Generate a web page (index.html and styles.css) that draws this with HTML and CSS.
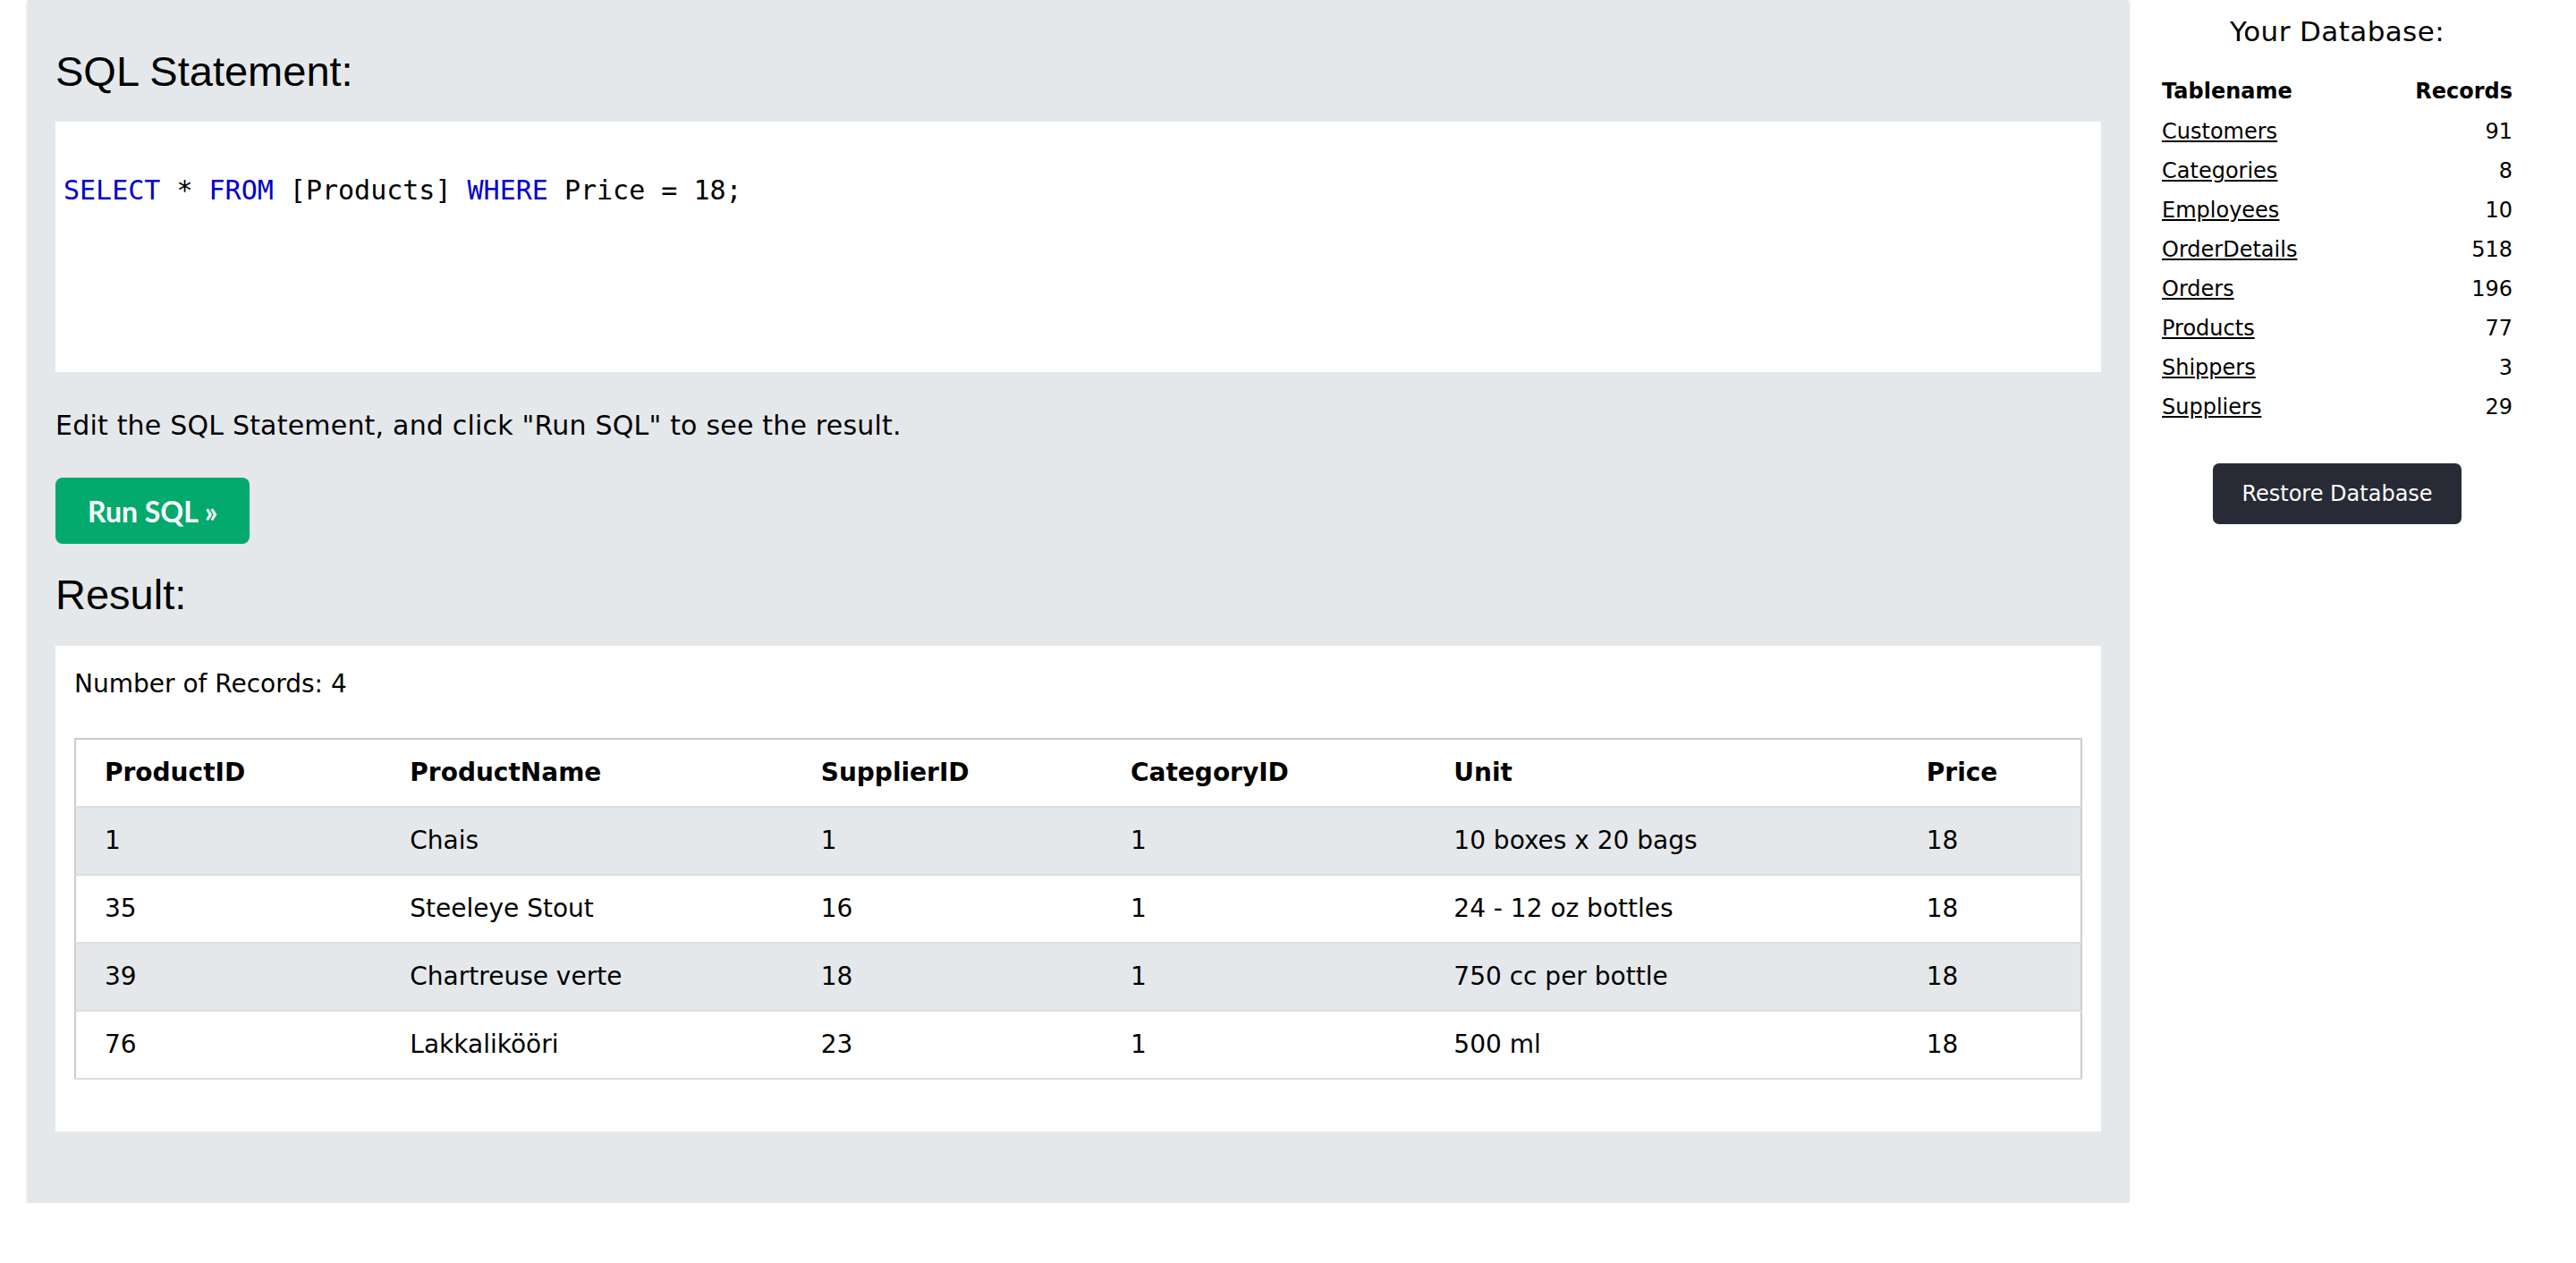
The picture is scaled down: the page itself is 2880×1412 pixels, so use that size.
FILE: index.html
```html
<!DOCTYPE html>
<html lang="en">
<head>
<meta charset="utf-8">
<title>SQL Tryit</title>
<link rel="stylesheet" href="styles.css">
</head>
<body>
<div class="layout">
  <main class="panel">
    <h2 class="heading">SQL Statement:</h2>
    <div class="code-box">
      <div class="code-line"><span class="kw">SELECT</span> * <span class="kw">FROM</span> [Products] <span class="kw">WHERE</span> Price = 18;</div>
    </div>
    <p class="hint">Edit the SQL Statement, and click "Run SQL" to see the result.</p>
    <button class="run-btn" type="button">Run SQL »</button>
    <h2 class="heading result-heading">Result:</h2>
    <div class="result-box">
      <div class="record-count">Number of Records: 4</div>
      <table class="result-table">
        <colgroup>
          <col class="c1"><col class="c2"><col class="c3"><col class="c4"><col class="c5"><col class="c6">
        </colgroup>
        <thead>
          <tr><th>ProductID</th><th>ProductName</th><th>SupplierID</th><th>CategoryID</th><th>Unit</th><th>Price</th></tr>
        </thead>
        <tbody>
          <tr><td>1</td><td>Chais</td><td>1</td><td>1</td><td>10 boxes x 20 bags</td><td>18</td></tr>
          <tr><td>35</td><td>Steeleye Stout</td><td>16</td><td>1</td><td>24 - 12 oz bottles</td><td>18</td></tr>
          <tr><td>39</td><td>Chartreuse verte</td><td>18</td><td>1</td><td>750 cc per bottle</td><td>18</td></tr>
          <tr><td>76</td><td>Lakkalikööri</td><td>23</td><td>1</td><td>500 ml</td><td>18</td></tr>
        </tbody>
      </table>
    </div>
  </main>
  <aside class="sidebar">
    <div class="db-title">Your Database:</div>
    <table class="db-table">
      <thead>
        <tr><th class="name">Tablename</th><th class="num">Records</th></tr>
      </thead>
      <tbody>
        <tr><td class="name"><a href="#">Customers</a></td><td class="num">91</td></tr>
        <tr><td class="name"><a href="#">Categories</a></td><td class="num">8</td></tr>
        <tr><td class="name"><a href="#">Employees</a></td><td class="num">10</td></tr>
        <tr><td class="name"><a href="#">OrderDetails</a></td><td class="num">518</td></tr>
        <tr><td class="name"><a href="#">Orders</a></td><td class="num">196</td></tr>
        <tr><td class="name"><a href="#">Products</a></td><td class="num">77</td></tr>
        <tr><td class="name"><a href="#">Shippers</a></td><td class="num">3</td></tr>
        <tr><td class="name"><a href="#">Suppliers</a></td><td class="num">29</td></tr>
      </tbody>
    </table>
    <button class="restore-btn" type="button">Restore Database</button>
  </aside>
</div>
</body>
</html>
```

FILE: styles.css
```css
* { box-sizing: border-box; }

html, body {
  margin: 0;
  padding: 0;
  background: #ffffff;
  color: #000000;
  font-family: "DejaVu Sans", Verdana, sans-serif;
  font-size: 30px;
}

.layout {
  display: flex;
  align-items: flex-start;
}

.panel {
  margin-left: 31px;
  width: 2348px;
  flex: 0 0 2348px;
  background: #e5e8eb;
  padding: 52px 30px 80px 31px;
  box-shadow: 0 2px 4px rgba(0, 0, 0, 0.18), 1px 0 3px rgba(0, 0, 0, 0.08);
}

.heading {
  margin: 0;
  font-family: "Liberation Sans", Arial, sans-serif;
  font-weight: normal;
  font-size: 47px;
  line-height: 56px;
}

.code-box {
  margin-top: 28px;
  height: 280px;
  background: #ffffff;
  padding: 54px 9px 0 9px;
}

.code-line {
  font-family: "DejaVu Sans Mono", Menlo, monospace;
  font-size: 30px;
  line-height: 45px;
  white-space: pre;
}

.kw { color: #0000cd; }

.hint {
  margin: 37px 0 0 0;
  font-size: 30px;
  line-height: 45px;
  letter-spacing: 0.2px;
}

.run-btn {
  display: block;
  margin-top: 36px;
  height: 74px;
  padding: 0 36px;
  border: none;
  border-radius: 8px;
  background: #04aa6d;
  color: #ffffff;
  font-family: Lato, "Open Sans", sans-serif;
  font-weight: 700;
  font-size: 32px;
  line-height: 71px;
}

.result-heading {
  margin-top: 29px;
}

.result-box {
  margin-top: 29px;
  background: #ffffff;
  padding: 22px 21px 58px 21px;
}

.record-count {
  font-size: 28px;
  line-height: 42px;
}

.result-table {
  margin-top: 39px;
  width: 100%;
  table-layout: fixed;
  border-collapse: collapse;
  border: 2px solid #cccccc;
  font-size: 28px;
  line-height: 42px;
}

.result-table .c1 { width: 358px; }
.result-table .c2 { width: 459px; }
.result-table .c3 { width: 346px; }
.result-table .c4 { width: 361px; }
.result-table .c5 { width: 528px; }
.result-table .c6 { width: 189px; }

.result-table th,
.result-table td {
  text-align: left;
  padding: 16px 16px;
  border-bottom: 2px solid #dddddd;
  white-space: nowrap;
}

.result-table th:first-child,
.result-table td:first-child {
  padding-left: 32px;
}

.result-table th { font-weight: bold; }

.result-table tbody tr:nth-child(odd) { background: #e5e8eb; }
.result-table tbody tr:nth-child(even) { background: #ffffff; }

.sidebar {
  width: 468px;
  flex: 0 0 468px;
  padding: 12px 38px 0 38px;
}

.db-title {
  text-align: center;
  font-size: 31px;
  line-height: 46px;
  letter-spacing: 0.4px;
}

.db-table {
  margin-top: 22px;
  width: 100%;
  border-collapse: collapse;
  font-size: 24px;
  line-height: 36px;
}

.db-table th,
.db-table td {
  padding: 4px 0;
}

.db-table th { padding-bottom: 5px; font-weight: bold; }

.db-table .name { text-align: left; }
.db-table .num { text-align: right; }

.db-table a {
  color: #000000;
  text-decoration: underline;
}

.restore-btn {
  display: block;
  margin: 41px auto 0 auto;
  height: 68px;
  padding: 0 32px;
  border: none;
  border-radius: 7px;
  background: #282a35;
  color: #ffffff;
  font-family: "DejaVu Sans", Verdana, sans-serif;
  font-size: 24px;
  line-height: 68px;
}
```
